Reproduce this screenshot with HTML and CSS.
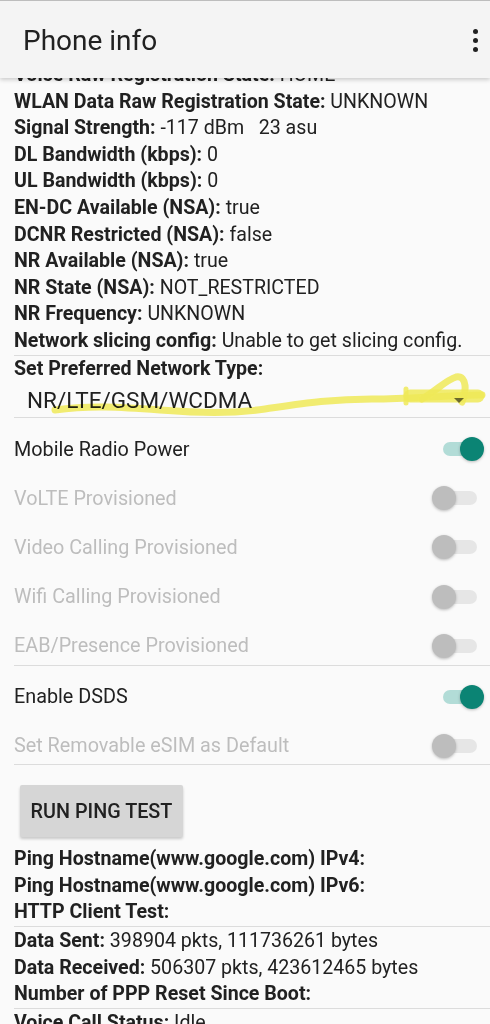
FILE: index.html
```html
<!DOCTYPE html>
<html>
	<head>
		<link rel="stylesheet" href="styles.css">
	</head>
	<body>
		<div class="screen">
			<div class="appbar">
				<span class="title">Phone info</span>
				<span class="kebab"><i></i><i></i><i></i></span>
			</div>
			<div class="content">
				<div class="info">
					<div class="line"><b>Voice Raw Registration State:</b> HOME</div>
					<div class="line"><b>WLAN Data Raw Registration State:</b> UNKNOWN</div>
					<div class="line"><b>Signal Strength:</b> -117 dBm&nbsp;&nbsp;&nbsp;23 asu</div>
					<div class="line"><b>DL Bandwidth (kbps):</b> 0</div>
					<div class="line"><b>UL Bandwidth (kbps):</b> 0</div>
					<div class="line"><b>EN-DC Available (NSA):</b> true</div>
					<div class="line"><b>DCNR Restricted (NSA):</b> false</div>
					<div class="line"><b>NR Available (NSA):</b> true</div>
					<div class="line"><b>NR State (NSA):</b> NOT_RESTRICTED</div>
					<div class="line"><b>NR Frequency:</b> UNKNOWN</div>
					<div class="line"><b>Network slicing config:</b> Unable to get slicing config.</div>
				</div>
				<div class="divider"></div>
				<div class="pref">
					<div class="line"><b>Set Preferred Network Type:</b></div>
					<div class="spinner">
						<span>NR/LTE/GSM/WCDMA</span>
						<span class="arrow"></span>
					</div>
					<svg class="scribble" width="490" height="60" viewBox="0 360 490 60">
						<path d="M55 410 C 90 405, 120 407, 160 410 S 230 414, 265 409 S 330 399, 372 399 S 430 396, 482 395" />
						<path d="M422 399 C 436 391, 446 380, 456 377 C 468 375, 466 393, 462 402" />
						<path class="band" d="M410 396 L 478 396" />
						<path class="tick" d="M406 389 L 406 403" />
					</svg>
				</div>
				<div class="divider"></div>
				<div class="switches">
					<div class="row"><span>Mobile Radio Power</span><span class="switch on"></span></div>
					<div class="row off"><span>VoLTE Provisioned</span><span class="switch"></span></div>
					<div class="row off"><span>Video Calling Provisioned</span><span class="switch"></span></div>
					<div class="row off"><span>Wifi Calling Provisioned</span><span class="switch"></span></div>
					<div class="row off"><span>EAB/Presence Provisioned</span><span class="switch"></span></div>
				</div>
				<div class="divider"></div>
				<div class="switches">
					<div class="row"><span>Enable DSDS</span><span class="switch on"></span></div>
					<div class="row off"><span>Set Removable eSIM as Default</span><span class="switch"></span></div>
				</div>
				<div class="divider"></div>
				<div class="ping">
					<button class="btn">RUN PING TEST</button>
				</div>
				<div class="info">
					<div class="line"><b>Ping Hostname(www.google.com) IPv4:</b></div>
					<div class="line"><b>Ping Hostname(www.google.com) IPv6:</b></div>
					<div class="line"><b>HTTP Client Test:</b></div>
				</div>
				<div class="divider"></div>
				<div class="info">
					<div class="line"><b>Data Sent:</b> 398904 pkts, 111736261 bytes</div>
					<div class="line"><b>Data Received:</b> 506307 pkts, 423612465 bytes</div>
					<div class="line"><b>Number of PPP Reset Since Boot:</b></div>
				</div>
				<div class="divider"></div>
				<div class="info">
					<div class="line"><b>Voice Call Status:</b> Idle</div>
				</div>
			</div>
		</div>
	</body>
</html>
```

FILE: styles.css
```css
body{
	margin: 0;
	background-color: #fafafa;
	font-family: Roboto, "Noto Sans", sans-serif;
	color: #212121;
}
.screen{
	width: 490px;
	height: 1024px;
	overflow: hidden;
	background-color: #fafafa;
}
.appbar{
	position: relative;
	z-index: 2;
	height: 77px;
	border-top: 1px solid #bdbdbd;
	background-color: #f4f4f4;
	box-shadow: 0 2px 4px rgba(0,0,0,0.18);
	display: flex;
	align-items: center;
	justify-content: space-between;
	padding-left: 23px;
	padding-right: 12px;
}
.title{
	font-size: 28px;
	font-weight: 400;
	color: #212121;
	margin-top: 2px;
}
.kebab{
	display: flex;
	flex-direction: column;
	gap: 4px;
	margin-top: 2px;
}
.kebab i{
	display: block;
	width: 5px;
	height: 5px;
	border-radius: 50%;
	background-color: #212121;
}
.content{
	margin-top: -16px;
	padding-left: 14px;
}
.line{
	font-size: 19.6px;
	line-height: 26.6px;
	white-space: nowrap;
	color: #212121;
}
.line b{
	font-weight: 700;
}
.divider{
	height: 1px;
	background-color: #dcdcdc;
}
.pref{
	position: relative;
}
.spinner{
	height: 35px;
	display: flex;
	align-items: center;
	justify-content: space-between;
	padding-left: 13px;
	padding-right: 26px;
	font-size: 22.5px;
	color: #212121;
}
.arrow{
	width: 0;
	height: 0;
	border-left: 5px solid transparent;
	border-right: 5px solid transparent;
	border-top: 5px solid #6e6e6e;
	margin-top: 2px;
}
.scribble{
	position: absolute;
	left: -14px;
	top: 4px;
	pointer-events: none;
	mix-blend-mode: multiply;
}
.scribble path{
	fill: none;
	stroke: #f4ee5a;
	stroke-opacity: 0.85;
	stroke-width: 7;
	stroke-linecap: round;
	stroke-linejoin: round;
}
.scribble .band{
	stroke-width: 13;
}
.scribble .tick{
	stroke-width: 5;
}
.row{
	height: 49.3px;
	padding-top: 12px;
	box-sizing: border-box;
	display: flex;
	align-items: center;
	justify-content: space-between;
	padding-right: 13px;
	font-size: 19.8px;
	color: #212121;
}
.switches .row:first-child{
	padding-top: 13px;
}
.row.off{
	color: #bdbdbd;
}
.switch{
	position: relative;
	width: 34px;
	height: 14px;
	border-radius: 7px;
	background-color: #e6e6e6;
}
.switch::after{
	content: "";
	position: absolute;
	left: -11px;
	top: -5px;
	width: 24px;
	height: 24px;
	border-radius: 50%;
	background-color: #bdbdbd;
	box-shadow: 0 1px 3px rgba(0,0,0,0.25);
}
.switch.on{
	background-color: #b2dcd7;
}
.switch.on::after{
	left: 17px;
	background-color: #0b8474;
}
.ping{
	padding: 20px 0 9px 6px;
}
.btn{
	width: 163px;
	height: 52px;
	border: none;
	border-radius: 2px;
	background-color: #d6d6d6;
	box-shadow: 0 2px 3px rgba(0,0,0,0.2);
	font-family: Roboto, sans-serif;
	font-size: 19.8px;
	font-weight: 500;
	color: #212121;
	padding: 0;
}
.info + .divider + .info{
	padding-top: 1px;
}
```
